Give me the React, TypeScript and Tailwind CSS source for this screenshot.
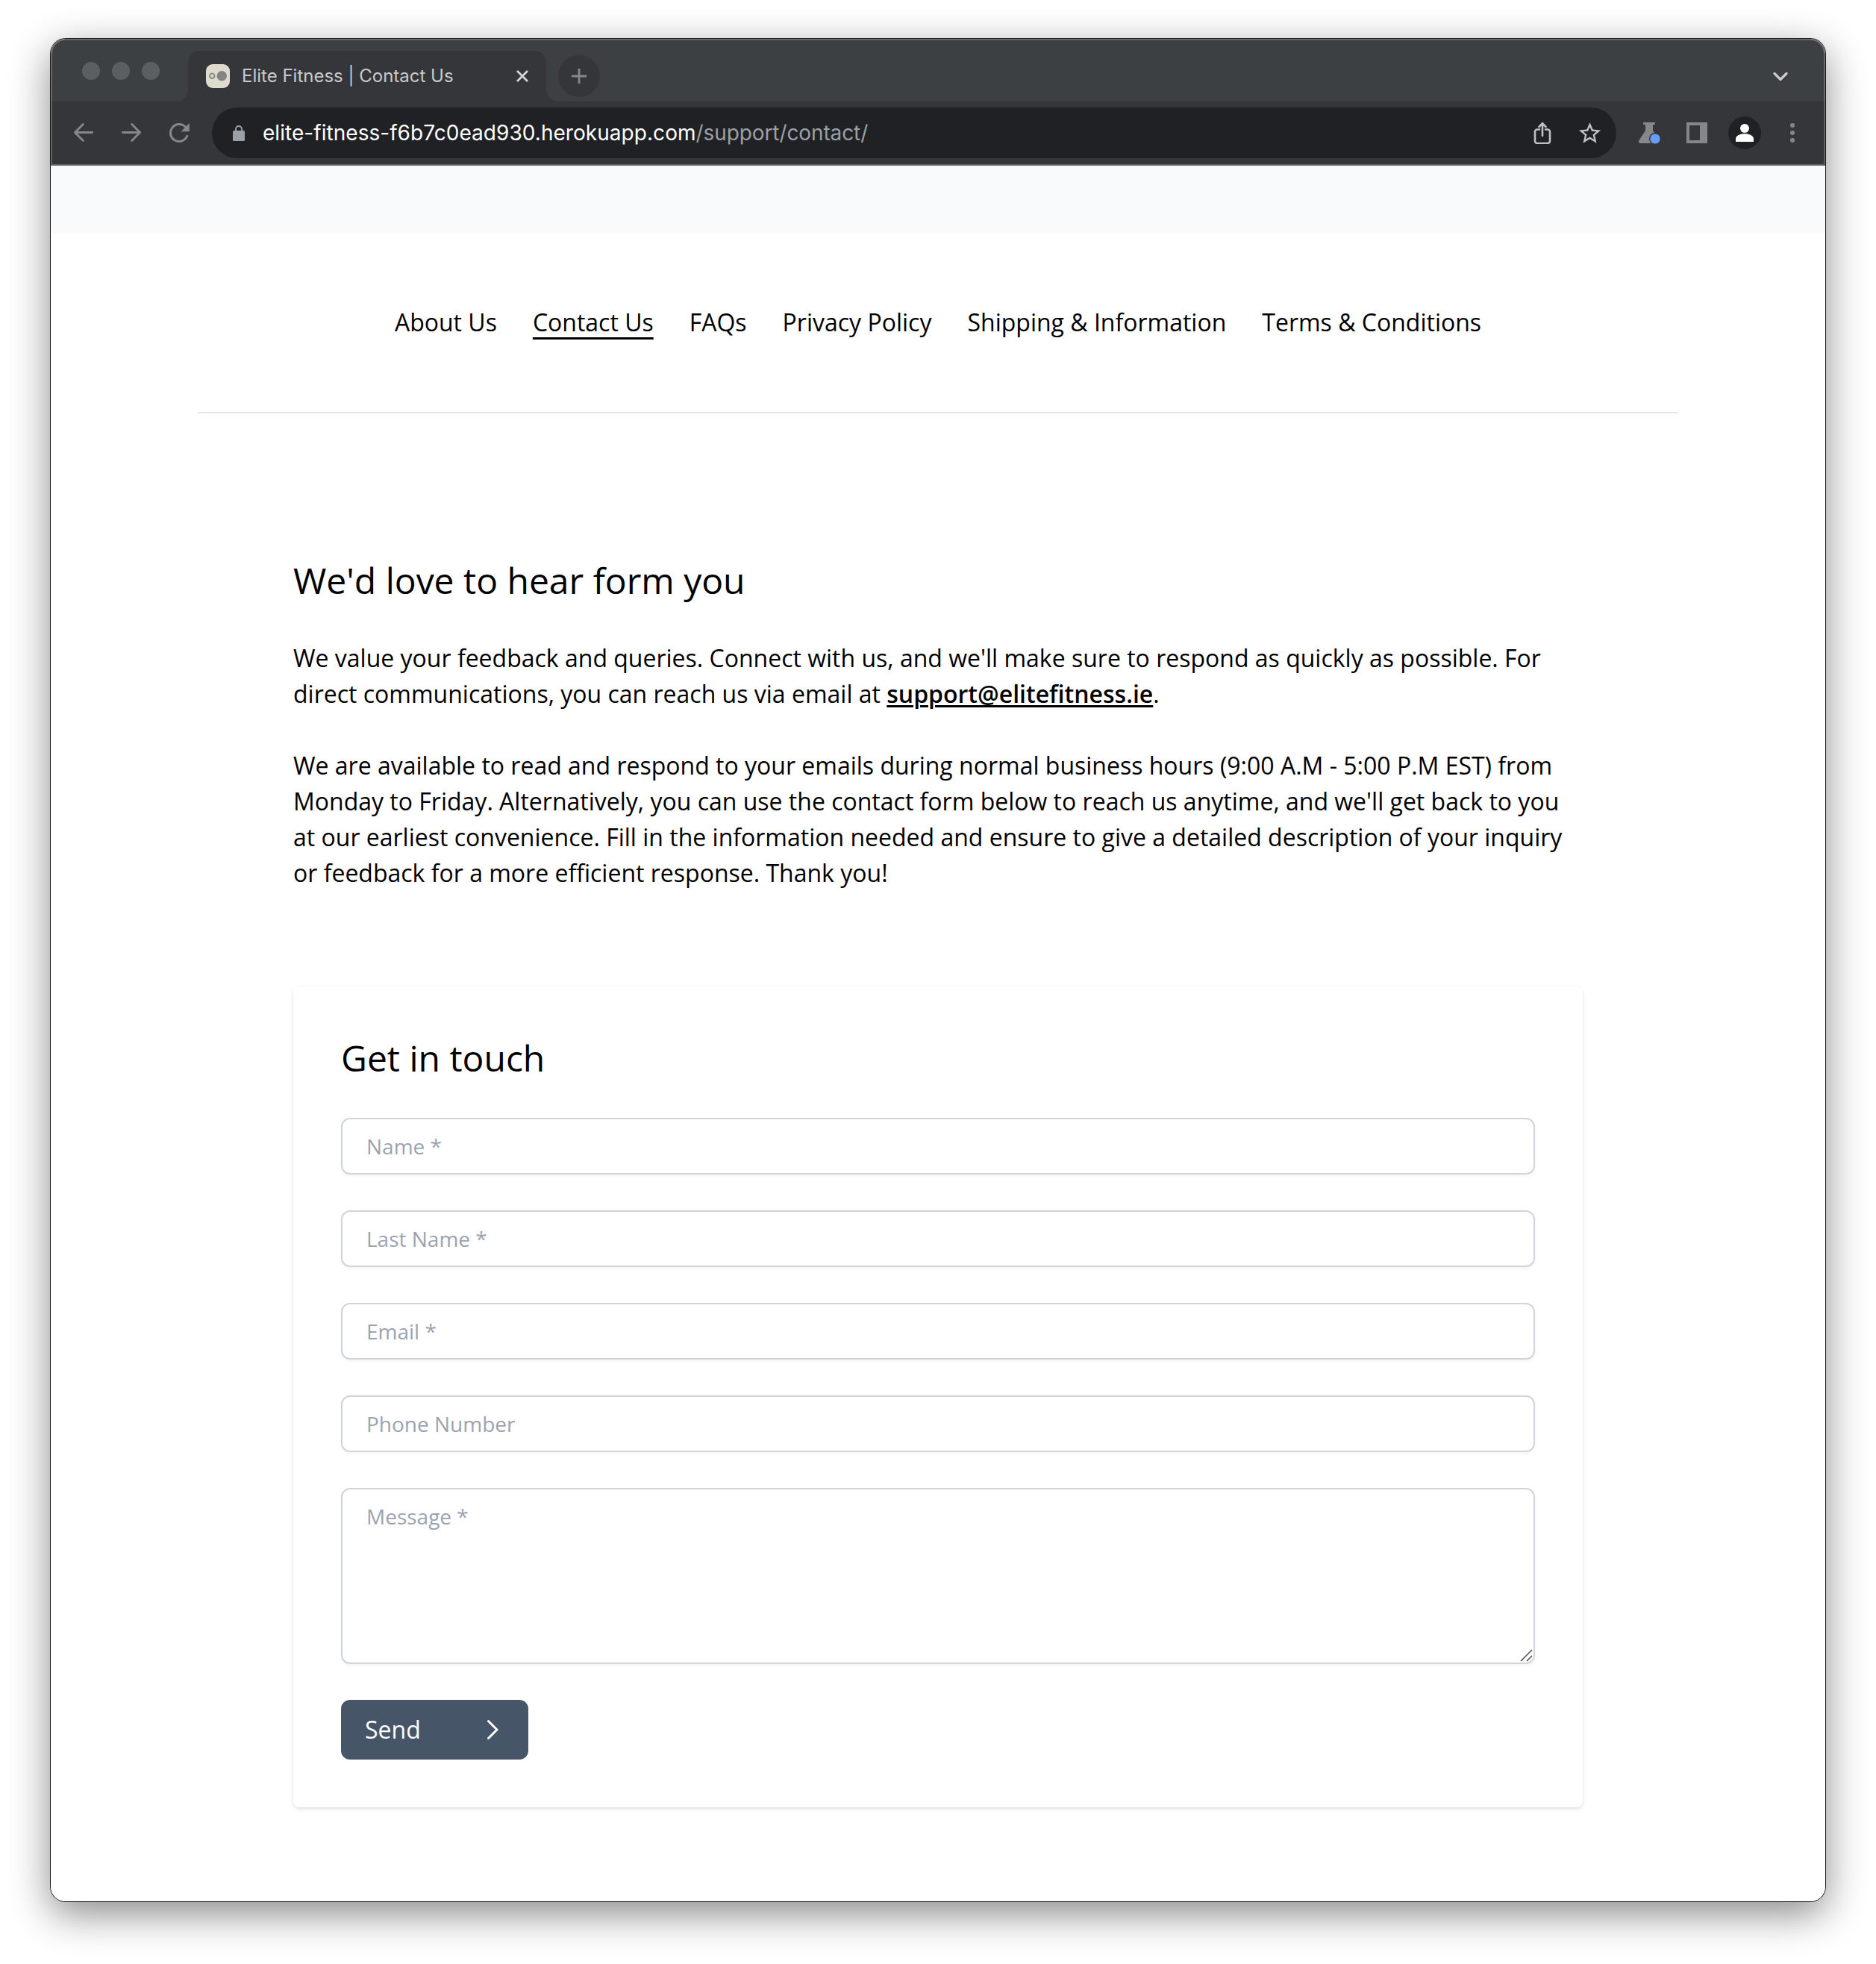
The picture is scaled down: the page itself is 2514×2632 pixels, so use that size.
import React from "react";

const stroke = { fill: "none", strokeLinecap: "round", strokeLinejoin: "round" } as const;

function TabStrip() {
  return (
    <div className="flex h-[84px] bg-[#3c4043]">
      <div className="flex h-6 mt-[31px] ml-[42px] gap-4">
        <span className="size-6 rounded-full bg-[#5b5f62]" />
        <span className="size-6 rounded-full bg-[#5b5f62]" />
        <span className="size-6 rounded-full bg-[#5b5f62]" />
      </div>
      <div className="ml-[22px] mt-4 flex">
        <span className="flex w-4 self-end bg-[#35363a]">
          <span className="size-4 rounded-br-2xl bg-[#3c4043]" />
        </span>
        <div className="flex h-[68px] w-[480px] items-center rounded-t-2xl bg-[#35363a] pl-6 pr-6">
          <svg width="32" height="32" viewBox="0 0 32 32">
            <rect width="32" height="32" rx="9" fill="#dfdace" />
            <circle cx="8.3" cy="15.7" r="3.2" fill="none" stroke="#8f8d88" strokeWidth="2.2" />
            <circle cx="21.3" cy="15.7" r="6.7" fill="#858585" />
          </svg>
          <span className="ml-4 whitespace-nowrap text-[24px] leading-8 text-[#c9cacc]">Elite Fitness | Contact Us</span>
          <svg className="ml-auto" width="16" height="16" viewBox="0 0 16 16" fill="none" stroke="#d2d4d6" strokeWidth="2.8">
            <path d="M1 1l14 14M15 1L1 15" />
          </svg>
        </div>
        <span className="flex w-4 self-end bg-[#35363a]">
          <span className="size-4 rounded-bl-2xl bg-[#3c4043]" />
        </span>
      </div>
      <div className="mt-[22px] flex size-14 items-center justify-center rounded-full bg-[#35363a]">
        <svg width="22" height="22" viewBox="0 0 22 22" stroke="#86888a" strokeWidth="2.8">
          <path d="M11 1v20M1 11h20" />
        </svg>
      </div>
      <svg className="ml-auto mr-[50px] mt-[44px]" width="20" height="14" viewBox="0 0 20 14" {...stroke} stroke="#c9cbcd" strokeWidth="3.2">
        <path d="M2 2.5l8 8 8-8" />
      </svg>
    </div>
  );
}

function Toolbar() {
  return (
    <div className="flex h-[86px] items-center bg-[#35363a] pb-[2px]">
      <svg className="ml-[30px]" width="28" height="28" viewBox="0 0 28 28" {...stroke} stroke="#86878a" strokeWidth="2.8">
        <path d="M25.600 13.500H2.800M13.400 2.500L2.400 13.500l11 11" />
      </svg>
      <svg className="ml-9" width="28" height="28" viewBox="0 0 28 28" {...stroke} stroke="#86878a" strokeWidth="2.8">
        <path d="M2.400 13.500h22.800M14.600 2.500l11 11-11 11" />
      </svg>
      <svg className="ml-9" width="28" height="28" viewBox="0 0 28 28" {...stroke} stroke="#86878a" strokeWidth="3">
        <path d="M24.700 18.300A11.500 11.500 0 1 1 22.500 6.300" />
        <path d="M27.800 1v11.200H16.600z" fill="#86878a" stroke="none" />
      </svg>
      <div className="ml-[30px] flex h-[68px] w-[1882px] items-center rounded-full bg-[#202124] pl-7 pr-[18px]">
        <svg width="16" height="22" viewBox="0 0 16 22">
          <rect y="8" width="16" height="14" rx="1.5" fill="#9aa0a6" />
          <path d="M4 8.500V6a4 4 0 0 1 8 0v2.500" fill="none" stroke="#9aa0a6" strokeWidth="2" />
        </svg>
        <span className="ml-6 whitespace-nowrap text-[28px] leading-9 text-[#9aa0a6]">
          <span className="tracking-[0.045px] text-white">elite-fitness-f6b7c0ead930.herokuapp.com</span>
          <span className="tracking-[-0.1px]">/support/contact/</span>
        </span>
        <svg className="ml-auto" width="24" height="30" viewBox="0 0 24 30" {...stroke} stroke="#bfc0c2" strokeWidth="2.6">
          <path d="M8 10.500H5a3 3 0 0 0-3 3v12.500a3 3 0 0 0 3 3h14a3 3 0 0 0 3-3V13.500a3 3 0 0 0-3-3h-3M12 19V2.500M7.500 7L12 2.200 16.500 7" />
        </svg>
        <svg className="ml-[34px]" width="35" height="35" viewBox="0 0 24 24" fill="#c2c3c5">
          <path d="M22 9.240l-7.190-.620L12 2 9.190 8.630 2 9.240l5.460 4.730L5.820 21 12 17.270 18.180 21l-1.630-7.030L22 9.240zM12 15.400l-3.760 2.270 1-4.280-3.320-2.880 4.380-.380L12 6.100l1.710 4.040 4.380.380-3.320 2.880 1 4.280L12 15.400z" />
        </svg>
      </div>
      <svg className="ml-[29px]" width="32" height="30" viewBox="0 0 32 30">
        <path d="M7 1h16v3h-3v8L28 24c1 2.500-.2 5-2.500 5H3.500C1.300 29 .400 27 1.500 25L10 12V4H7z" fill="#86878a" />
        <circle cx="23" cy="23" r="8" fill="#35363a" />
        <circle cx="23" cy="23" r="6.600" fill="#669df6" />
      </svg>
      <svg className="ml-[33px]" width="28" height="28" viewBox="0 0 28 28">
        <path d="M0 0h28v28H0zM4 4v20h14V4z" fill="#86878a" fillRule="evenodd" />
      </svg>
      <div className="ml-7 flex size-11 items-center justify-center rounded-full bg-[#202124]">
        <svg width="24" height="26" viewBox="0 0 24 26" fill="#fff">
          <circle cx="12" cy="7" r="6" />
          <path d="M0 25v-4c0-4 6-6.700 12-6.700S24 17 24 21v4z" />
        </svg>
      </div>
      <svg className="ml-[39px]" width="6" height="28" viewBox="0 0 6 28" fill="#86878a">
        <circle cx="3" cy="4" r="3" />
        <circle cx="3" cy="14" r="3" />
        <circle cx="3" cy="24" r="3" />
      </svg>
    </div>
  );
}

const links = ["About Us", "Contact Us", "FAQs", "Privacy Policy", "Shipping & Information", "Terms & Conditions"];
const fields = ["Name *", "Last Name *", "Email *", "Phone Number"];

function ContactForm() {
  return (
    <form className="mt-32 flex flex-col gap-12 rounded-lg bg-white p-16 shadow-[0_2px_6px_0_rgba(0,0,0,0.1),0_2px_4px_-2px_rgba(0,0,0,0.1)]">
      <h2 className="text-[48px] leading-[64px]">Get in touch</h2>
      {fields.map((label) => (
        <input
          key={label}
          placeholder={label}
          className="h-[76px] rounded-xl border-2 border-[#d1d5db] px-8 text-[28px] leading-10 shadow-[0_2px_4px_0_rgba(0,0,0,0.05)] placeholder:text-[#9ca3af]"
        />
      ))}
      <div className="relative flex">
        <textarea
          placeholder="Message *"
          className="block h-[236px] w-full resize-none rounded-xl border-2 border-[#d1d5db] px-8 py-4 text-[28px] leading-10 shadow-[0_2px_4px_0_rgba(0,0,0,0.05)] placeholder:text-[#9ca3af]"
        />
        <svg className="absolute bottom-[3px] right-[3px]" width="17" height="17" viewBox="0 0 17 17" stroke="#555" strokeWidth="1.6">
          <path d="M1 16L16 1M9 16l7-7" />
        </svg>
      </div>
      <button type="button" className="flex h-20 w-[251px] items-center justify-between rounded-xl bg-[#475569] pl-8 pr-10 text-[32px] leading-[48px] text-white">
        Send
        <svg width="16" height="28" viewBox="0 0 16 28" {...stroke} stroke="#fff" strokeWidth="3">
          <path d="M2.500 2.500L14 14 2.500 25.500" />
        </svg>
      </button>
    </form>
  );
}

export default function App() {
  return (
    <div className="h-[2632px] w-[2514px] overflow-hidden bg-white px-[68px] pt-[52px] pb-[84px]">
      <div className="h-full rounded-[20px] shadow-[0_0_0_1px_rgba(0,0,0,0.88),0_16px_54px_rgba(0,0,0,0.48)]">
        <div className="h-full overflow-hidden rounded-[20px] bg-white">
          <header className="relative h-[170px] font-['Inter',sans-serif]">
            <TabStrip />
            <Toolbar />
            <div className="absolute inset-0 rounded-t-[20px] shadow-[inset_0_0_0_2px_rgba(255,255,255,0.22)]" />
          </header>
          <div className="h-[90px] bg-[#f8fafc]" />
          <main className="px-[197px] font-['Open_Sans',sans-serif] text-[32px] leading-[48px] text-black">
            <nav className="flex justify-center gap-12 border-b-2 border-[#e5e7eb] py-24">
              {links.map((label) => (
                <a
                  key={label}
                  className={
                    label === "Contact Us"
                      ? "whitespace-nowrap underline decoration-[3px] underline-offset-[8px]"
                      : "whitespace-nowrap"
                  }
                >
                  {label}
                </a>
              ))}
            </nav>
            <section className="px-32 pt-48">
              <h1 className="mb-12 text-[48px] leading-[64px]">We'd love to hear form you</h1>
              <p>
                We value your feedback and queries. Connect with us, and we'll make sure to respond as quickly as possible. For
                <br />
                direct communications, you can reach us via email at{" "}
                <a className="font-semibold underline decoration-[3px] underline-offset-[3px]">support@elitefitness.ie</a>.
              </p>
              <p className="mt-12">
                We are available to read and respond to your emails during normal business hours (9:00 A.M - 5:00 P.M EST) from
                <br />
                Monday to Friday. Alternatively, you can use the contact form below to reach us anytime, and we'll get back to you
                <br />
                at our earliest convenience. Fill in the information needed and ensure to give a detailed description of your inquiry
                <br />
                or feedback for a more efficient response. Thank you!
              </p>
              <ContactForm />
            </section>
          </main>
        </div>
      </div>
    </div>
  );
}
